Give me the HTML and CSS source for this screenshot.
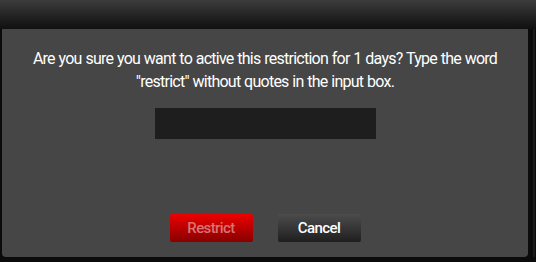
FILE: index.html
```html
<!DOCTYPE html>
<html lang="en">
<head>
  <meta charset="UTF-8">
  <title>Restriction</title>
  <link rel="stylesheet" href="styles.css">
</head>
<body>
  <div class="topbar"></div>
  <div class="layout">
    <div class="dialog">
      <p class="message">Are you sure you want to active this restriction for 1 days? Type the word "restrict" without quotes in the input box.</p>
      <input type="text" class="confirm-input">
      <div class="actions">
        <button class="btn btn-restrict" disabled>Restrict</button>
        <button class="btn btn-cancel">Cancel</button>
      </div>
    </div>
    <div class="scroll-edge"></div>
  </div>
</body>
</html>
```

FILE: styles.css
```css
body {
  margin: 0;
  background: #0b0b0b;
  font-family: Roboto, "Liberation Sans", sans-serif;
  height: 262px;
  overflow: hidden;
}

.topbar {
  height: 29px;
  background: linear-gradient(#3c3c3c, #1a1a1a 75%, #111);
}

.layout {
  display: flex;
  padding-left: 2px;
  height: 228px;
}

.dialog {
  width: 526px;
  background: #464646;
  border-radius: 0 0 4px 4px;
  display: flex;
  flex-direction: column;
  align-items: center;
}

.scroll-edge {
  width: 2px;
  margin-left: 5px;
  background: #1c1c1c;
}

.message {
  margin: 18px 0 0;
  color: #fff;
  font-size: 16px;
  line-height: 23px;
  text-align: center;
  letter-spacing: -0.75px;
  word-spacing: 0.5px;
  width: 476px;
}

.confirm-input {
  margin-top: 15px;
  width: 221px;
  height: 31px;
  box-sizing: border-box;
  background: #1e1e1e;
  border: none;
  outline: none;
}

.actions {
  margin-top: 75px;
  display: flex;
  gap: 25px;
}

.btn {
  width: 83px;
  height: 28px;
  border: none;
  border-radius: 2px;
  font-family: Roboto, "Liberation Sans", sans-serif;
  font-size: 15px;
  font-weight: 500;
  letter-spacing: -0.6px;
  padding: 0;
}

.btn-restrict {
  background: linear-gradient(#ec0000, #880000);
  color: #d97272;
}

.btn-cancel {
  background: linear-gradient(#4c4c4c, #1f1f1f);
  color: #fff;
}
```
